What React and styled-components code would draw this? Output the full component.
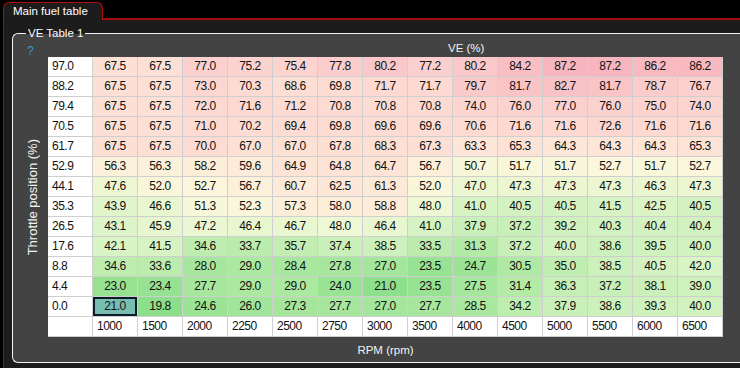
import React from "react";
import styled, { createGlobalStyle } from "styled-components";

const Global = createGlobalStyle`
  html, body { margin: 0; padding: 0; background: #000; overflow: hidden; }
  #root { height: 368px; }
`;

const FONT = `"Liberation Sans", Arial, sans-serif`;
const PAGE_BG = "#1c1c1c";
const GROUP_BG = "#434343";

const Window = styled.div`
  height: 368px;
  display: flex;
  flex-direction: column;
  background: #000;
  font-family: ${FONT};
  font-size: 11px;
`;

const TabStrip = styled.div`
  display: flex;
  height: 20px;
  padding-top: 2px;
  box-sizing: border-box;
`;

const Tab = styled.div`
  margin-left: 3px;
  padding: 0 14px 0 9px;
  border: 1px solid #b30d0d;
  border-bottom: none;
  border-radius: 6px 6px 0 0;
  background: ${PAGE_BG};
  color: #fff;
  font-size: 11.5px;
  line-height: 17px;
  white-space: nowrap;
`;

const TabFiller = styled.div`
  flex: 1;
  border-bottom: 2px solid #a50b0b;
`;

const Page = styled.div`
  flex: 1;
  margin-left: 3px;
  border-left: 1px solid #a50b0b;
  background: ${PAGE_BG};
  padding: 13px 0 0 8px;
  min-width: 0;
`;

const Group = styled.section`
  position: relative;
  border: 1px solid #f4f4f4;
  border-right: none;
  border-radius: 6px 0 0 6px;
  background: ${GROUP_BG};
`;

const Legend = styled.div`
  position: absolute;
  top: -7px;
  left: 13px;
  padding: 0 2px;
  color: #fff;
  font-size: 11.5px;
  line-height: 13px;
  background: linear-gradient(${PAGE_BG} 0 7px, ${GROUP_BG} 7px 100%);
`;

const Layout = styled.div`
  display: grid;
  grid-template-columns: 35px 675px;
  grid-template-rows: 23px 281px 24px;
`;

const Help = styled.div`
  color: #3a98d8;
  font-size: 12px;
  padding: 11px 0 0 14px;
  line-height: 12px;
`;

const TopAxis = styled.div`
  color: #f2f2f2;
  padding: 6px 0 0 400px;
  font-size: 11.5px;
  line-height: 16px;
  white-space: nowrap;
`;

const SideAxis = styled.div`
  display: flex;
  align-items: center;
  justify-content: center;
  padding-left: 4px;
  color: #f2f2f2;
  span {
    writing-mode: vertical-rl;
    transform: rotate(180deg);
    white-space: nowrap;
    font-size: 13px;
  }
`;

const BottomAxis = styled.div`
  grid-column: 2;
  color: #f2f2f2;
  font-size: 11.5px;
  text-align: center;
  line-height: 24px;
`;

const Table = styled.div`
  display: grid;
  grid-template-columns: repeat(15, 45px);
  grid-auto-rows: 20px;
  align-self: start;
  background: #fff;
`;

const Cell = styled.div`
  box-sizing: border-box;
  border-right: 1px solid #cfcfcf;
  border-bottom: 1px solid #cfcfcf;
  color: #111;
  font-size: 12px;
  line-height: 19px;
  letter-spacing: -0.5px;
  text-align: ${(p) => (p.$left ? "left" : "center")};
  padding-left: ${(p) => (p.$left ? "4px" : "0")};
  background: ${(p) => p.$bg || "#fff"};
  box-shadow: ${(p) => (p.$selected ? "inset 0 0 0 2px #0c1a2c" : "none")};
`;

const rows = [
  ["97.0", "67.5 67.5 77.0 75.2 75.4 77.8 80.2 77.2 80.2 84.2 87.2 87.2 86.2 86.2"],
  ["88.2", "67.5 67.5 73.0 70.3 68.6 69.8 71.7 71.7 79.7 81.7 82.7 81.7 78.7 76.7"],
  ["79.4", "67.5 67.5 72.0 71.6 71.2 70.8 70.8 70.8 74.0 76.0 77.0 76.0 75.0 74.0"],
  ["70.5", "67.5 67.5 71.0 70.2 69.4 69.8 69.6 69.6 70.6 71.6 71.6 72.6 71.6 71.6"],
  ["61.7", "67.5 67.5 70.0 67.0 67.0 67.8 68.3 67.3 63.3 65.3 64.3 64.3 64.3 65.3"],
  ["52.9", "56.3 56.3 58.2 59.6 64.9 64.8 64.7 56.7 50.7 51.7 51.7 52.7 51.7 52.7"],
  ["44.1", "47.6 52.0 52.7 56.7 60.7 62.5 61.3 52.0 47.0 47.3 47.3 47.3 46.3 47.3"],
  ["35.3", "43.9 46.6 51.3 52.3 57.3 58.0 58.8 48.0 41.0 40.5 40.5 41.5 42.5 40.5"],
  ["26.5", "43.1 45.9 47.2 46.4 46.7 48.0 46.4 41.0 37.9 37.2 39.2 40.3 40.4 40.4"],
  ["17.6", "42.1 41.5 34.6 33.7 35.7 37.4 38.5 33.5 31.3 37.2 40.0 38.6 39.5 40.0"],
  ["8.8", "34.6 33.6 28.0 29.0 28.4 27.8 27.0 23.5 24.7 30.5 35.0 38.5 40.5 42.0"],
  ["4.4", "23.0 23.4 27.7 29.0 29.0 24.0 21.0 23.5 27.5 31.4 36.3 37.2 38.1 39.0"],
  ["0.0", "21.0 19.8 24.6 26.0 27.3 27.7 27.0 27.7 28.5 34.2 37.9 38.6 39.3 40.0"],
];

const rpm = ["1000", "1500", "2000", "2250", "2500", "2750", "3000", "3500", "4000", "4500", "5000", "5500", "6000", "6500"];

const stops = [
  [19, 136, 222, 136],
  [30, 174, 233, 162],
  [40, 210, 242, 192],
  [48, 238, 248, 212],
  [53, 252, 246, 220],
  [62, 253, 232, 216],
  [70, 253, 220, 211],
  [78, 251, 206, 205],
  [88, 247, 180, 190],
];

function colorFor(v) {
  if (v <= stops[0][0]) return `rgb(${stops[0].slice(1).join(",")})`;
  for (let i = 1; i < stops.length; i++) {
    const a = stops[i - 1];
    const b = stops[i];
    if (v <= b[0]) {
      const t = (v - a[0]) / (b[0] - a[0]);
      const c = [1, 2, 3].map((k) => Math.round(a[k] + (b[k] - a[k]) * t));
      return `rgb(${c.join(",")})`;
    }
  }
  const l = stops[stops.length - 1];
  return `rgb(${l.slice(1).join(",")})`;
}

export default function App() {
  return (
    <>
      <Global />
      <Window>
        <TabStrip>
          <Tab>Main fuel table</Tab>
          <TabFiller />
        </TabStrip>
        <Page>
          <Group>
            <Legend>VE Table 1</Legend>
            <Layout>
              <Help>?</Help>
              <TopAxis>VE (%)</TopAxis>
              <SideAxis>
                <span>Throttle position (%)</span>
              </SideAxis>
              <Table>
                {rows.map(([label, vals], ri) => (
                  <React.Fragment key={label}>
                    <Cell $left>{label}</Cell>
                    {vals.split(" ").map((v, ci) => {
                      const selected = ri === rows.length - 1 && ci === 0;
                      return (
                        <Cell
                          key={ci}
                          $selected={selected}
                          $bg={selected ? "#77beb0" : colorFor(parseFloat(v))}
                        >
                          {v}
                        </Cell>
                      );
                    })}
                  </React.Fragment>
                ))}
                <Cell $left />
                {rpm.map((r) => (
                  <Cell key={r} $left>
                    {r}
                  </Cell>
                ))}
              </Table>
              <BottomAxis>RPM (rpm)</BottomAxis>
            </Layout>
          </Group>
        </Page>
      </Window>
    </>
  );
}
